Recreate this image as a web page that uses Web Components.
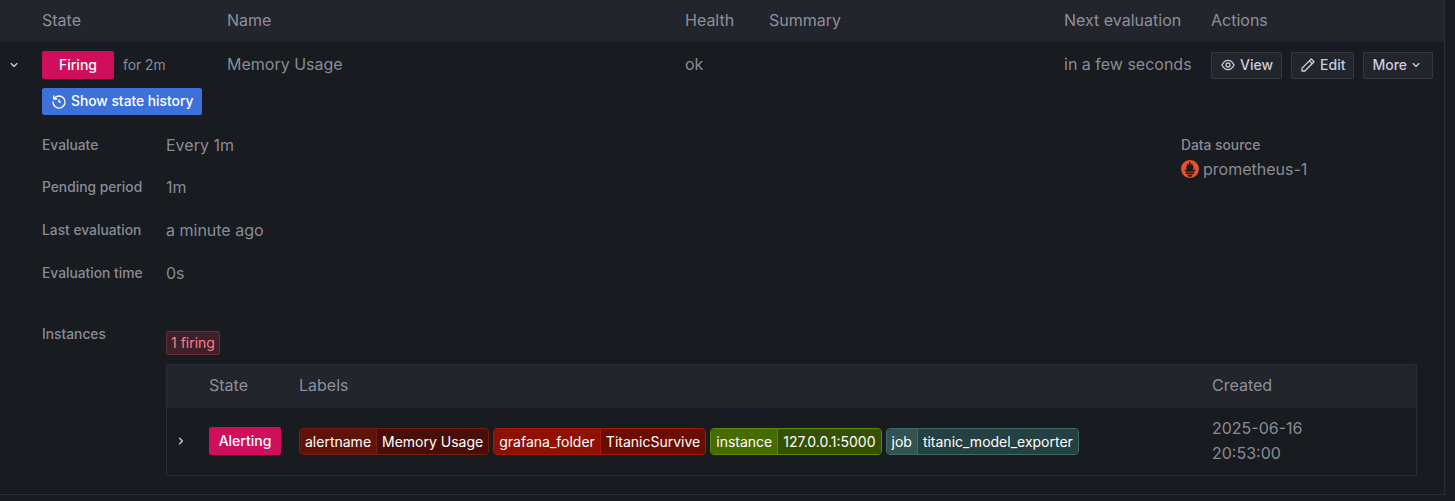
<!DOCTYPE html>
<html>
<head>
<meta charset="utf-8">
<title>Alert rule</title>
<style>
    html, body { margin: 0; height: 501px; overflow: hidden; background: #181b1f; }
    body { font-family: Inter, "Liberation Sans", sans-serif; font-size: 16px; color: rgba(204, 204, 220, .65); }
</style>
</head>
<body>

<rule-table>
    <rule-row slot="row">
        <state-badge slot="state">Firing</state-badge>
        <span slot="since">for 2m</span>
        <span slot="name">Memory Usage</span>
        <span slot="health">ok</span>
        <span slot="next">in a few seconds</span>
        <g-button slot="actions" icon="eye">View</g-button>
        <g-button slot="actions" icon="pen">Edit</g-button>
        <g-button slot="actions" trailing="down">More</g-button>
        <g-button slot="history" icon="history" variant="primary">Show state history</g-button>

        <rule-details slot="details">
            <detail-row label="Evaluate">Every 1m</detail-row>
            <detail-row label="Pending period">1m</detail-row>
            <detail-row label="Last evaluation">a minute ago</detail-row>
            <detail-row label="Evaluation time">0s</detail-row>
            <data-source slot="source">prometheus-1</data-source>
            <instances-table slot="instances">
                <label-tag slot="labels" key="alertname" value="Memory Usage" tone="maroon"></label-tag>
                <label-tag slot="labels" key="grafana_folder" value="TitanicSurvive" tone="red"></label-tag>
                <label-tag slot="labels" key="instance" value="127.0.0.1:5000" tone="green"></label-tag>
                <label-tag slot="labels" key="job" value="titanic_model_exporter" tone="teal"></label-tag>
            </instances-table>
        </rule-details>
    </rule-row>
</rule-table>

<script>
const icons = {
    down: 'M17,9.17a1,1,0,0,0-1.41,0L12,12.71,8.46,9.17a1,1,0,0,0-1.41,0,1,1,0,0,0,0,1.42l4.24,4.24a1,1,0,0,0,1.42,0L17,10.59A1,1,0,0,0,17,9.17Z',
    right: 'M14.83,11.29,10.59,7.05a1,1,0,0,0-1.42,0,1,1,0,0,0,0,1.41L12.71,12,9.17,15.54a1,1,0,0,0,0,1.41,1,1,0,0,0,.71.29,1,1,0,0,0,.71-.29l4.24-4.24A1,1,0,0,0,14.83,11.29Z',
    eye: 'M21.92,11.6C19.9,6.91,16.1,4,12,4S4.1,6.91,2.08,11.6a1,1,0,0,0,0,.8C4.1,17.09,7.9,20,12,20s7.9-2.91,9.92-7.6A1,1,0,0,0,21.92,11.6ZM12,18c-3.17,0-6.17-2.29-7.9-6C5.83,8.29,8.83,6,12,6s6.17,2.29,7.9,6C18.17,15.71,15.17,18,12,18ZM12,8a4,4,0,1,0,4,4A4,4,0,0,0,12,8Zm0,6a2,2,0,1,1,2-2A2,2,0,0,1,12,14Z',
    pen: 'M22,7.24a1,1,0,0,0-.29-.71L17.47,2.29A1,1,0,0,0,16.76,2a1,1,0,0,0-.71.29L13.22,5.12h0L2.29,16.05a1,1,0,0,0-.29.71V21a1,1,0,0,0,1,1H7.24A1,1,0,0,0,8,21.71L18.87,10.78h0L21.71,8a1.19,1.19,0,0,0,.22-.33,1,1,0,0,0,0-.24.7.7,0,0,0,0-.14ZM6.83,20H4V17.17l9.93-9.93,2.83,2.83ZM18.17,8.66,15.34,5.83l1.42-1.41,2.82,2.82Z',
    history: 'M12,2A10,10,0,0,0,5.12,4.77V3a1,1,0,0,0-2,0V7.5a1,1,0,0,0,1,1H8.62a1,1,0,0,0,0-2H6.22A8,8,0,1,1,4,12a1,1,0,0,0-2,0A10,10,0,1,0,12,2Zm0,6a1,1,0,0,0-1,1v3a1,1,0,0,0,1,1h2a1,1,0,0,0,0-2H13V9A1,1,0,0,0,12,8Z'
}
const svg = (name, size) => `<svg viewBox="0 0 24 24" width="${size}" height="${size}" fill="currentColor"><path d="${icons[name]}"/></svg>`

const prometheus = `<svg viewBox="0 0 256 257" width="18" height="18"><path fill="#e6522c" d="M128.001.667C57.311.667 0 57.971 0 128.664c0 70.69 57.311 127.998 128.001 127.998S256 199.354 256 128.664C256 57.97 198.689.667 128 .667zm0 239.56c-20.112 0-36.419-13.435-36.419-30.004h72.838c0 16.566-16.307 30.004-36.419 30.004zm60.153-39.94H67.842V178.47h120.314v21.816h-.003zm-.432-33.045H68.185c-.398-.458-.804-.91-1.188-1.375-12.315-14.954-15.216-22.76-18.032-30.716-.048-.262 14.933 3.06 25.556 5.45 0 0 5.466 1.265 13.458 2.722-7.673-8.994-12.23-20.428-12.23-32.116 0-25.658 19.68-48.079 12.58-66.201 6.91.562 14.304 14.583 14.803 36.505 7.346-10.152 10.42-28.69 10.42-40.056 0-11.769 7.755-25.44 15.512-25.907-6.915 11.396 1.79 21.165 9.53 45.4 2.902 9.103 2.532 24.423 4.772 34.138.744-20.178 4.213-49.62 17.014-59.784-5.647 12.8.836 28.818 5.27 36.518 7.154 12.424 11.49 21.836 11.49 39.638 0 11.936-4.407 23.173-11.84 31.958 8.452-1.586 14.289-3.016 14.289-3.016l27.45-5.355c.002-.002-3.987 16.401-19.314 32.197z"/></svg>`

// small helper, every element here is the same shape: static markup in an open shadow root
const define = (name, css, html) => {
    customElements.define(name, class extends HTMLElement {
        constructor() {
            super()
            this.attachShadow({mode: 'open'})
            const body = typeof html === 'function' ? html(this) : html
            this.shadowRoot.innerHTML = `<style>${css}</style>${body}`
        }
    })
}

define('rule-table', `
    :host { display: block; width: 1445px; height: 495px; box-sizing: border-box; border-right: 1px solid #2a2d33; border-bottom: 1px solid #2a2d33; }
    .head { display: grid; grid-template-columns: 42px 185px 458px 84px 295px 147px 1fr; height: 42px; box-sizing: border-box; padding-bottom: 2px; align-items: center; background: #22252b; line-height: 21px; }
    .head span:first-child { grid-column: 2; }
`, `
    <div class="head">
        <span>State</span><span>Name</span><span>Health</span><span>Summary</span><span>Next evaluation</span><span>Actions</span>
    </div>
    <slot name="row"></slot>
`)

define('rule-row', `
    :host { display: block; }
    .top { display: grid; grid-template-columns: 42px 185px 458px 84px 295px 147px 1fr; padding-top: 9px; align-items: center; line-height: 21px; }
    .chev { display: flex; padding-left: 6px; color: #ccccdc; }
    .state { display: flex; align-items: center; gap: 9px; font-size: 13.8px; }
    .cell { padding-bottom: 2px; }
    .actions { display: flex; gap: 9px; }
    .history { padding: 9px 0 0 42px; }
`, `
    <div class="top">
        <span class="chev">${svg('down', 16)}</span>
        <span class="state"><slot name="state"></slot><slot name="since"></slot></span>
        <span class="cell"><slot name="name"></slot></span>
        <span class="cell"><slot name="health"></slot></span>
        <span class="cell"></span>
        <span class="cell"><slot name="next"></slot></span>
        <span class="actions"><slot name="actions"></slot></span>
    </div>
    <div class="history"><slot name="history"></slot></div>
    <slot name="details"></slot>
`)

define('state-badge', `
    :host { display: inline-flex; justify-content: center; align-items: center; width: 72px; height: 28px; border-radius: 2px; background: #d10e5c; color: #fff; font-size: 14px; font-weight: 500; line-height: 1; }
`, `<slot></slot>`)

define('g-button', `
    :host { display: inline-flex; align-items: center; height: 27px; box-sizing: border-box; padding: 0 8px; gap: 4px; border-radius: 2px; border: 1px solid rgba(204,204,220,.12); background: #22252b; color: #ccccdc; font-size: 14px; font-weight: 500; line-height: 1; }
    :host([variant=primary]) { background: #3d71d9; border-color: #3d71d9; color: #fff; font-size: 13.8px; }
    svg { display: block; flex: none; }
    .trail { margin-left: -3px; }
`, el => `
    ${el.getAttribute('icon') ? svg(el.getAttribute('icon'), 16) : ''}
    <slot></slot>
    ${el.getAttribute('trailing') ? `<span class="trail">${svg(el.getAttribute('trailing'), 16)}</span>` : ''}
`)

define('rule-details', `
    :host { display: block; padding: 19.5px 0 0 42px; }
    .meta { display: flex; justify-content: space-between; }
    .source { width: 263px; }
    .instances { display: grid; grid-template-columns: 124px 1fr; padding-top: 18.2px; padding-right: 27px; }
    .instances-label { font-size: 13.8px; font-weight: 500; line-height: 21px; }
`, `
    <div class="meta">
        <div><slot></slot></div>
        <div class="source"><slot name="source"></slot></div>
    </div>
    <div class="instances">
        <div class="instances-label">Instances</div>
        <slot name="instances"></slot>
    </div>
`)

define('detail-row', `
    :host { display: grid; grid-template-columns: 124px 1fr; height: 42.8px; line-height: 21px; }
    .label { font-size: 13.8px; font-weight: 500; }
`, el => `<span class="label">${el.getAttribute('label')}</span><span><slot></slot></span>`)

define('data-source', `
    :host { display: block; }
    .label { font-size: 13.8px; font-weight: 500; line-height: 21px; }
    .value { display: flex; align-items: center; gap: 4px; margin-top: 3px; line-height: 21px; }
`, `<div class="label">Data source</div><div class="value">${prometheus}<slot></slot></div>`)

define('instances-table', `
    :host { display: block; padding-top: 7px; }
    .count { display: inline-block; box-sizing: border-box; height: 24px; padding: 0 4px; border: 1px solid #6a2a36; border-radius: 2px; background: #3d2029; color: #ff7f86; font-size: 14px; line-height: 22px; vertical-align: top; }
    .box { margin-top: 9px; border: 1px solid #2a2d33; border-radius: 2px; }
    .row { display: grid; grid-template-columns: 42px 90px 913px 1fr; align-items: center; }
    .head { height: 43px; box-sizing: border-box; padding-bottom: 2px; background: #22252b; }
    .head span:first-child { grid-column: 2; }
    .body { height: 67px; }
    .chev { display: flex; padding-left: 6px; color: #ccccdc; }
    .labels { display: flex; gap: 4px; }
    .created { line-height: 25px; }
`, `
    <span class="count">1 firing</span>
    <div class="box">
        <div class="row head"><span>State</span><span>Labels</span><span>Created</span></div>
        <div class="row body">
            <span class="chev">${svg('right', 16)}</span>
            <span class="alert"><state-badge>Alerting</state-badge></span>
            <span class="labels"><slot name="labels"></slot></span>
            <span class="created">2025-06-16<br>20:53:00</span>
        </div>
    </div>
`)

define('label-tag', `
    :host { display: inline-flex; height: 27px; box-sizing: border-box; border: 1px solid var(--edge); border-radius: 4px; overflow: hidden; color: #fff; font-size: 14px; line-height: 25px; }
    :host([tone=maroon]) { --edge: #7a1c10; --key: #5f1409; --val: #470f07; }
    :host([tone=red]) { --edge: #a81a08; --key: #8f1000; --val: #6c0c00; }
    :host([tone=green]) { --edge: #5c8a08; --key: #466b00; --val: #355000; }
    :host([tone=teal]) { --edge: #3f6b68; --key: #315452; --val: #254040; }
    span { padding: 0 5px; }
    .k { background: var(--key); border-right: 1px solid var(--edge); }
    .v { background: var(--val); }
`, el => `<span class="k">${el.getAttribute('key')}</span><span class="v">${el.getAttribute('value')}</span>`)
</script>
</body>
</html>
